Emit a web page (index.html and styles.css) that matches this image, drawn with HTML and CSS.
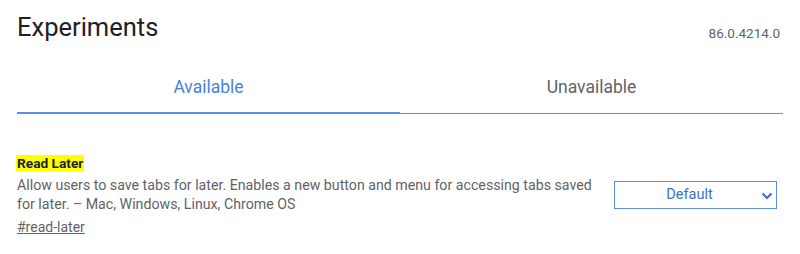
FILE: index.html
```html
<!DOCTYPE html>
<html>
<head>
<meta charset="utf-8">
<link rel="stylesheet" href="styles.css">
</head>
<body>
<div class="page">
  <header class="header">
    <h1 class="title">Experiments</h1>
    <div class="version">86.0.4214.0</div>
  </header>
  <nav class="tabs">
    <div class="tab tab-active">Available</div>
    <div class="tab">Unavailable</div>
  </nav>
  <section class="experiment">
    <div class="exp-text">
      <div class="exp-name"><span class="highlight">Read Later</span></div>
      <p class="exp-desc">Allow users to save tabs for later. Enables a new button and menu for accessing tabs saved for later. – Mac, Windows, Linux, Chrome OS</p>
      <a class="exp-link" href="#read-later">#read-later</a>
    </div>
    <div class="select">
      <span class="select-label">Default</span>
      <svg class="chevron" width="12" height="8" viewBox="0 0 12 8"><path d="M1.5 1.5 L6 6 L10.5 1.5" fill="none" stroke="#3c6fd0" stroke-width="2.2"/></svg>
    </div>
  </section>
</div>
</body>
</html>
```
FILE: styles.css
```css
html, body {
  margin: 0;
  padding: 0;
  background: #ffffff;
}
body {
  font-family: Roboto, "Liberation Sans", Arial, sans-serif;
  color: #202124;
}
.page {
  padding: 0 17px;
}
.header {
  display: flex;
  justify-content: space-between;
  align-items: flex-end;
  height: 44px;
}
.title {
  margin: 0;
  font-size: 25.5px;
  font-weight: 400;
  line-height: 30px;
  padding-bottom: 2px;
  color: #202124;
}
.version {
  font-size: 13.5px;
  color: #5f6368;
  line-height: 16px;
  padding-bottom: 3px;
  margin-right: 3px;
}
.tabs {
  display: flex;
  margin-top: 33px;
}
.tab {
  flex: 1;
  text-align: center;
  font-size: 17.5px;
  line-height: 20px;
  color: #5f6368;
  padding-bottom: 16px;
  border-bottom: 1px solid #80868b;
}
.tab-active {
  color: #4a80dc;
  border-bottom: 2px solid #5b8ee0;
  padding-bottom: 15px;
}
.experiment {
  display: flex;
  align-items: flex-start;
  margin-top: 41px;
}
.exp-text {
  flex: 1;
  min-width: 0;
}
.exp-name {
  font-size: 13.7px;
  font-weight: 700;
  line-height: 16px;
}
.highlight {
  background: #ffff00;
  padding: 0 1px;
  margin-left: -1px;
}
.exp-desc {
  margin: 5px 0 0;
  font-size: 14.2px;
  line-height: 19px;
  color: #5f6368;
  padding-right: 14px;
}
.exp-link {
  display: inline-block;
  margin-top: 4px;
  font-size: 14px;
  line-height: 18px;
  color: #5f6368;
  text-decoration: underline;
}
.select {
  flex: none;
  box-sizing: border-box;
  width: 163px;
  height: 28px;
  margin-top: 26px;
  margin-right: 6px;
  padding-right: 12px;
  border: 1px solid #5b8ee0;
  display: flex;
  align-items: center;
  justify-content: center;
  position: relative;
  color: #3c6fd0;
  font-size: 14.5px;
}
.select-label {
  line-height: 18px;
}
.chevron {
  position: absolute;
  right: 3px;
  top: 10px;
}
```
